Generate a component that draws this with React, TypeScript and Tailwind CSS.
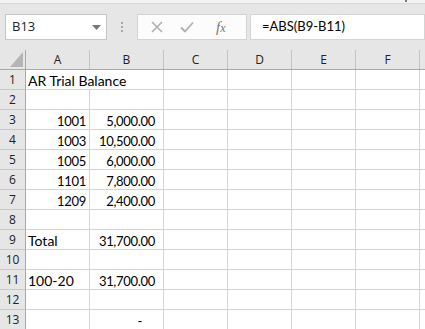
import React from "react";

const cellFont = { fontFamily: "Lato, 'Open Sans', sans-serif" };
const uiFont = { fontFamily: "'Open Sans', sans-serif" };

type Row = { n: number; a?: string; aRight?: boolean; b?: string; bDash?: boolean };

const rows: Row[] = [
  { n: 1, a: "AR Trial Balance" },
  { n: 2 },
  { n: 3, a: "1001", aRight: true, b: "5,000.00" },
  { n: 4, a: "1003", aRight: true, b: "10,500.00" },
  { n: 5, a: "1005", aRight: true, b: "6,000.00" },
  { n: 6, a: "1101", aRight: true, b: "7,800.00" },
  { n: 7, a: "1209", aRight: true, b: "2,400.00" },
  { n: 8 },
  { n: 9, a: "Total", b: "31,700.00" },
  { n: 10 },
  { n: 11, a: "100-20", b: "31,700.00" },
  { n: 12 },
  { n: 13, bDash: true },
];

export default function App() {
  return (
    <div className="w-[425px] h-[329px] overflow-hidden bg-[#e6e6e6] select-none">
      {/* top strip */}
      <div className="h-[4px] bg-[#f3f3f3] border-b border-[#d6d6d6] relative">
        <div className="absolute left-[405px] top-0 w-[2px] h-[2px] bg-[#777]" />
      </div>
      {/* formula bar */}
      <div className="h-[46px] flex items-start pt-[10px]">
        <div className="ml-[5px] w-[102px] h-[26px] bg-white border border-[#c6c6c6] flex items-center justify-between pl-[6px] pr-[5px]">
          <span className="text-[13px] text-[#222]" style={uiFont}>B13</span>
          <svg width="9" height="5" viewBox="0 0 9 5"><path d="M0 0h9L4.5 5z" fill="#777" /></svg>
        </div>
        <div className="w-[30px] h-[26px] flex flex-col items-center justify-center gap-[2px]">
          <div className="w-[2px] h-[2px] bg-[#a8a8a8]" />
          <div className="w-[2px] h-[2px] bg-[#a8a8a8]" />
          <div className="w-[2px] h-[2px] bg-[#a8a8a8]" />
        </div>
        <div className="w-[110px] h-[26px] bg-[#fcfcfc] border border-[#d4d4d4] flex items-center">
          <svg className="ml-[13px]" width="12" height="12" viewBox="0 0 12 12">
            <path d="M1 1L11 11M11 1L1 11" stroke="#b0b0b0" strokeWidth="1.6" />
          </svg>
          <svg className="ml-[17px]" width="14" height="12" viewBox="0 0 14 12">
            <path d="M1 6.5L5 10.5L13 1.5" stroke="#b0b0b0" strokeWidth="1.8" fill="none" />
          </svg>
          <span className="ml-[22px] text-[15px] italic text-[#777]" style={{ fontFamily: "'Liberation Serif', serif" }}>
            f<span className="text-[12px]">x</span>
          </span>
        </div>
        <div className="ml-[3px] flex-1 h-[26px] bg-white border border-[#d4d4d4] flex items-center pl-[11px]">
          <span className="text-[13px] text-black" style={cellFont}>=ABS(B9-B11)</span>
        </div>
      </div>
      {/* column header */}
      <div className="flex h-[20px] border-b border-[#a9a9a9] text-[12px] text-[#222]" style={uiFont}>
        <div className="w-[26px] border-r border-[#a9a9a9] relative">
          <svg className="absolute left-[10px] top-[2px]" width="13" height="15" viewBox="0 0 13 15">
            <path d="M13 0V15H0z" fill="#b5b5b5" />
          </svg>
        </div>
        {[
          ["A", "w-[64px]"],
          ["B", "w-[74px]"],
          ["C", "w-[64px]"],
          ["D", "w-[64px]"],
          ["E", "w-[64px]"],
          ["F", "w-[64px]"],
        ].map(([l, w]) => (
          <div key={l} className={`${w} border-r border-[#c3c3c3] flex items-center justify-center leading-none`}>
            {l}
          </div>
        ))}
        <div className="flex-1" />
      </div>
      {/* rows */}
      {rows.map((r) => (
        <div key={r.n} className="flex h-[20px]">
          <div
            className="w-[26px] border-r border-b border-[#a9a9a9] border-b-[#c8c8c8] flex items-center justify-center text-[12px] text-[#222] leading-none"
            style={uiFont}
          >
            {r.n}
          </div>
          <div className="flex flex-1 bg-white text-black leading-none" style={cellFont}>
            <div
              className={`w-[64px] border-b border-[#d4d4d4] flex items-end pb-[1px] whitespace-nowrap ${
                r.n === 1 ? "" : "border-r"
              } ${r.aRight ? "justify-end pr-[3px] text-[13px] tracking-[-0.3px]" : "pl-[2px] text-[14px]"}`}
            >
              <span className={r.n === 1 ? "relative z-10" : ""}>{r.a ?? ""}</span>
            </div>
            <div
              className={`w-[74px] border-r border-b border-[#d4d4d4] flex items-end pb-[1px] justify-end text-[13px] tracking-[-0.3px] ${
                r.bDash ? "pr-[21px]" : "pr-[8px]"
              }`}
            >
              {r.bDash ? "-" : r.b ?? ""}
            </div>
            <div className="w-[64px] border-r border-b border-[#d4d4d4]" />
            <div className="w-[64px] border-r border-b border-[#d4d4d4]" />
            <div className="w-[64px] border-r border-b border-[#d4d4d4]" />
            <div className="w-[64px] border-r border-b border-[#d4d4d4]" />
            <div className="flex-1 border-b border-[#d4d4d4]" />
          </div>
        </div>
      ))}
    </div>
  );
}
